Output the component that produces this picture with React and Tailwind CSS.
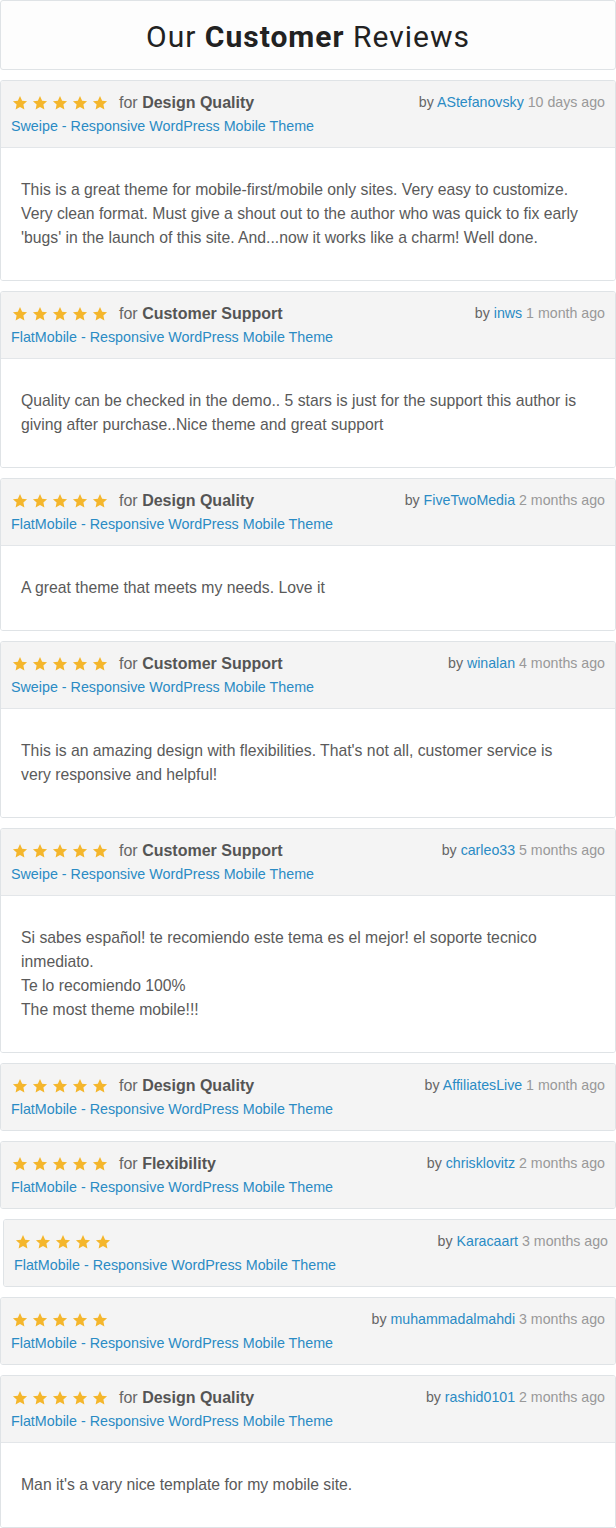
const reviews = [
  {
    topic: 'Design Quality',
    author: 'AStefanovsky',
    when: '10 days ago',
    item: 'Sweipe - Responsive WordPress Mobile Theme',
    body: [
      "This is a great theme for mobile-first/mobile only sites. Very easy to customize. Very clean format. Must give a shout out to the author who was quick to fix early 'bugs' in the launch of this site. And...now it works like a charm! Well done.",
    ],
  },
  {
    topic: 'Customer Support',
    author: 'inws',
    when: '1 month ago',
    item: 'FlatMobile - Responsive WordPress Mobile Theme',
    body: [
      'Quality can be checked in the demo.. 5 stars is just for the support this author is giving after purchase..Nice theme and great support',
    ],
  },
  {
    topic: 'Design Quality',
    author: 'FiveTwoMedia',
    when: '2 months ago',
    item: 'FlatMobile - Responsive WordPress Mobile Theme',
    body: ['A great theme that meets my needs. Love it'],
  },
  {
    topic: 'Customer Support',
    author: 'winalan',
    when: '4 months ago',
    item: 'Sweipe - Responsive WordPress Mobile Theme',
    body: [
      "This is an amazing design with flexibilities. That's not all, customer service is very responsive and helpful!",
    ],
  },
  {
    topic: 'Customer Support',
    author: 'carleo33',
    when: '5 months ago',
    item: 'Sweipe - Responsive WordPress Mobile Theme',
    body: [
      'Si sabes español! te recomiendo este tema es el mejor! el soporte tecnico',
      'inmediato.',
      'Te lo recomiendo 100%',
      'The most theme mobile!!!',
    ],
  },
  {
    topic: 'Design Quality',
    author: 'AffiliatesLive',
    when: '1 month ago',
    item: 'FlatMobile - Responsive WordPress Mobile Theme',
  },
  {
    topic: 'Flexibility',
    author: 'chrisklovitz',
    when: '2 months ago',
    item: 'FlatMobile - Responsive WordPress Mobile Theme',
  },
  {
    author: 'Karacaart',
    when: '3 months ago',
    item: 'FlatMobile - Responsive WordPress Mobile Theme',
    shifted: true,
  },
  {
    author: 'muhammadalmahdi',
    when: '3 months ago',
    item: 'FlatMobile - Responsive WordPress Mobile Theme',
  },
  {
    topic: 'Design Quality',
    author: 'rashid0101',
    when: '2 months ago',
    item: 'FlatMobile - Responsive WordPress Mobile Theme',
    body: ["Man it's a vary nice template for my mobile site."],
  },
];

function Star() {
  return (
    <svg viewBox="0 0 24 24" className="w-[16px] h-[16px] fill-[#f4b62c]">
      <path d="M12 1.6l3.2 6.9 7.4.8-5.5 5.1 1.5 7.4L12 18l-6.6 3.8 1.5-7.4-5.5-5.1 7.4-.8z" />
    </svg>
  );
}

function Review({ r }) {
  return (
    <div
      className={
        r.shifted
          ? 'ml-[3px] mr-[-3px] border border-[#dfe3e6] rounded-[3px] overflow-hidden'
          : 'border border-[#dfe3e6] rounded-[3px] overflow-hidden'
      }
    >
      <div className="bg-[#f4f4f4] h-[66px] px-[10px] pt-[11px]">
        <div className="flex justify-between items-center h-[22px]">
          <div className="flex items-center">
            <div className="flex gap-[4px] pl-[1px]">
              <Star />
              <Star />
              <Star />
              <Star />
              <Star />
            </div>
            {r.topic && (
              <span className="ml-[11px] text-[16px] text-[#666]">
                for <b className="font-bold text-[#555]">{r.topic}</b>
              </span>
            )}
          </div>
          <div className="text-[14.2px] text-[#666] -mt-[1px]">
            by <span className="text-[#2a8bc4]">{r.author}</span>{' '}
            <span className="text-[#999]">{r.when}</span>
          </div>
        </div>
        <div className="text-[14.3px] text-[#2a8bc4] leading-[20px] mt-[2px]">{r.item}</div>
      </div>
      {r.body && (
        <div className="border-t border-[#e3e6e9] bg-white pl-[20px] pr-[30px] py-[30px] text-[15.75px] leading-[24px] text-[#5a5a5a]">
          {r.body.map((line, i) => (
            <div key={i}>{line}</div>
          ))}
        </div>
      )}
    </div>
  );
}

export default function App() {
  return (
    <div className="w-[616px] bg-white font-['Liberation_Sans',Arial,sans-serif] overflow-hidden">
      <div className="h-[70px] pt-[3px] border border-[#dfe3e6] rounded-[3px] bg-[#fdfdfd] flex items-center justify-center">
        <h1 className="font-['Roboto',sans-serif] text-[30px] tracking-[1px] text-[#222] font-normal">
          Our <b className="font-bold">Customer</b> Reviews
        </h1>
      </div>
      <div className="flex flex-col gap-[10px] mt-[10px]">
        {reviews.map((r, i) => (
          <Review key={i} r={r} />
        ))}
      </div>
    </div>
  );
}
